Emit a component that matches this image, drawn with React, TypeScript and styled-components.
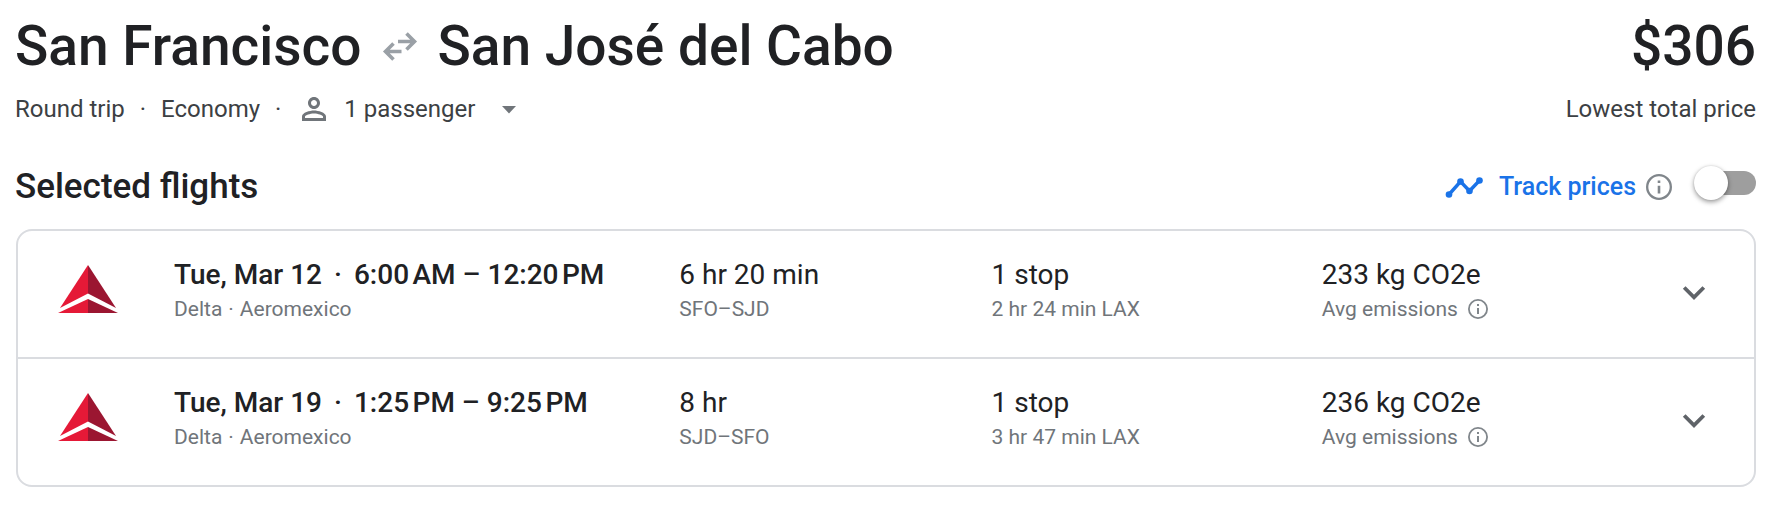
import React, { useState } from "react";
import styled, { createGlobalStyle } from "styled-components";

const GlobalStyle = createGlobalStyle`
  *, *::before, *::after { box-sizing: border-box; }
  body {
    margin: 0;
    background: #fff;
    color: #202124;
    font-family: "Google Sans", Roboto, "Liberation Sans", sans-serif;
  }
  h1, h2, p, ul { margin: 0; padding: 0; }
  button { font: inherit; color: inherit; background: none; border: 0; padding: 0; cursor: pointer; }
  svg { display: block; flex: none; }
`;

const Page = styled.main`
  padding: 16px 24px 24px 15px;
`;

const Bar = styled.div`
  display: flex;
  justify-content: space-between;
  align-items: center;
`;

const TitleBar = styled(Bar)`
  height: 60px;
  font-size: 55px;
  font-weight: 500;
  line-height: 60px;
`;

const Route = styled.h1`
  display: flex;
  align-items: center;
  gap: 20px;
  font: inherit;
`;

const DetailBar = styled(Bar)`
  margin-top: 15px;
  height: 36px;
  color: #3c4043;
  font-size: 24px;
  line-height: 36px;
`;

const TripDetails = styled.div`
  display: flex;
  align-items: center;
`;

const Dot = styled.span<{ $gap: number }>`
  margin: 0 ${(p) => p.$gap}px;
`;

const PassengerButton = styled.button`
  display: flex;
  align-items: center;
  gap: 12px;
  color: #3c4043;
`;

const SectionBar = styled(Bar)`
  margin-top: 32px;
  height: 56px;
`;

const SectionTitle = styled.h2`
  font-size: 35px;
  font-weight: 500;
  line-height: 48px;
`;

const TrackPrices = styled.div`
  display: flex;
  align-items: center;
`;

const TrackLabel = styled.label`
  display: flex;
  align-items: center;
  gap: 16px;
  color: #1a73e8;
  font-size: 25px;
  font-weight: 500;
  line-height: 32px;
`;

const InfoButton = styled.button<{ $gap: number }>`
  margin-left: ${(p) => p.$gap}px;
  color: #80868b;
`;

const Switch = styled.input`
  appearance: none;
  display: flex;
  align-items: center;
  width: 62px;
  height: 24px;
  margin: 0 0 8px 22px;
  border-radius: 12px;
  background: linear-gradient(to right, transparent 16px, #9e9e9e 16px);
  cursor: pointer;

  &::before {
    content: "";
    width: 34px;
    height: 34px;
    border-radius: 50%;
    background: #fff;
    box-shadow: 0 2px 5px rgba(0, 0, 0, 0.4), 0 0 2px rgba(0, 0, 0, 0.12);
  }

  &:checked {
    justify-content: flex-end;
    background: linear-gradient(to left, transparent 16px, #8ab4f8 16px);
  }
`;

const FlightList = styled.ul`
  list-style: none;
  margin: 14px 0 0 1px;
  border: 2px solid #dadce0;
  border-radius: 16px;
`;

const FlightRow = styled.li`
  display: grid;
  grid-template-columns: 116px 505fr 312fr 330fr 348fr 48px;
  padding: 26px 36px 32px 40px;

  & + & {
    border-top: 2px solid #dadce0;
  }
`;

const Logo = styled.div`
  padding-top: 8px;
`;

const Cell = styled.div`
  min-width: 0;
`;

const Primary = styled.p<{ $strong?: boolean }>`
  font-size: 28px;
  font-weight: ${(p) => (p.$strong ? 500 : 400)};
  line-height: 36px;
  white-space: nowrap;
`;

const Secondary = styled.p`
  display: flex;
  align-items: center;
  color: #70757a;
  font-size: 21px;
  line-height: 32px;
  white-space: nowrap;
`;

const ExpandButton = styled.button`
  display: flex;
  align-items: center;
  justify-content: center;
  width: 48px;
  height: 48px;
  margin-top: 12px;
  color: #5f6368;
`;

const SwapIcon = () => (
  <svg width="36" height="36" viewBox="0 0 36 36" fill="none" stroke="#9aa0a6" strokeWidth="3.6" aria-hidden="true">
    <path d="M16 13.5H32.5M24.5 5.5L32.5 13.5L24.5 21.5" />
    <path d="M19.5 23.5H3.5M11.5 15.5L3.5 23.5L11.5 31.5" />
  </svg>
);

const PersonIcon = () => (
  <svg width="36" height="36" viewBox="0 0 24 24" fill="#70757a" aria-hidden="true">
    <path d="M12 6c1.1 0 2 .9 2 2s-.9 2-2 2-2-.9-2-2 .9-2 2-2m0 9c2.7 0 5.8 1.29 6 2v1H6v-.99c.2-.72 3.3-2.01 6-2.01m0-11C9.79 4 8 5.79 8 8s1.79 4 4 4 4-1.79 4-4-1.79-4-4-4zm0 9c-2.67 0-8 1.34-8 4v3h16v-3c0-2.66-5.33-4-8-4z" />
  </svg>
);

const CaretIcon = () => (
  <svg width="44" height="36" viewBox="0 0 44 36" fill="#70757a" aria-hidden="true">
    <path d="M15 15h14l-7 7.500z" />
  </svg>
);

const TrendIcon = () => (
  <svg width="38" height="24" viewBox="0 0 38 24" fill="#1a73e8" aria-hidden="true">
    <path d="M4 19.500L15.500 6.500L24.500 16L34.500 5.500" fill="none" stroke="#1a73e8" strokeWidth="3.400" />
    <circle cx="4" cy="19.500" r="3.300" />
    <circle cx="15.500" cy="6.500" r="3.300" />
    <circle cx="24.500" cy="16" r="3.300" />
    <circle cx="34.500" cy="5.500" r="3.300" />
  </svg>
);

const InfoIcon = ({ size }: { size: number }) => (
  <svg width={size} height={size} viewBox="0 0 20 20" fill="currentColor" aria-hidden="true">
    <path d="M9 5h2v2H9zM9 9h2v6H9zM10 0a10 10 0 1 0 0 20a10 10 0 0 0 0-20zM10 18.200a8.200 8.200 0 1 1 0-16.400a8.200 8.200 0 0 1 0 16.400z" />
  </svg>
);

const ChevronIcon = () => (
  <svg width="24" height="24" viewBox="0 0 24 24" fill="none" stroke="currentColor" strokeWidth="3.800" aria-hidden="true">
    <path d="M2.200 6.500L12 16.300L21.800 6.500" />
  </svg>
);

const DeltaLogo = () => (
  <svg width="60" height="48" viewBox="0 0 60 48" role="img" aria-label="Delta">
    <path d="M30 0L2 43L30 28.500z" fill="#e51937" />
    <path d="M30 0L58 43L30 28.500z" fill="#9b1631" />
    <path d="M30 34L0 48H30z" fill="#e51937" />
    <path d="M30 34L60 48H30z" fill="#9b1631" />
  </svg>
);

interface Flight {
  date: string;
  times: string;
  duration: string;
  airports: string;
  layover: string;
  emissions: string;
}

const flights: Flight[] = [
  {
    date: "Tue, Mar 12",
    times: "6:00\u202fAM – 12:20\u202fPM",
    duration: "6 hr 20 min",
    airports: "SFO–SJD",
    layover: "2 hr 24 min LAX",
    emissions: "233 kg CO2e",
  },
  {
    date: "Tue, Mar 19",
    times: "1:25\u202fPM – 9:25\u202fPM",
    duration: "8 hr",
    airports: "SJD–SFO",
    layover: "3 hr 47 min LAX",
    emissions: "236 kg CO2e",
  },
];

export default function App() {
  const [tracking, setTracking] = useState(false);

  return (
    <Page>
      <GlobalStyle />
      <TitleBar>
        <Route>
          <span>San Francisco</span>
          <SwapIcon />
          <span>San José del Cabo</span>
        </Route>
        <span>$306</span>
      </TitleBar>
      <DetailBar>
        <TripDetails>
          <span>Round trip</span>
          <Dot $gap={15}>·</Dot>
          <span>Economy</span>
          <Dot $gap={15}>·</Dot>
          <PassengerButton type="button" aria-haspopup="dialog">
            <PersonIcon />
            <span>1 passenger</span>
            <CaretIcon />
          </PassengerButton>
        </TripDetails>
        <span>Lowest total price</span>
      </DetailBar>
      <SectionBar>
        <SectionTitle>Selected flights</SectionTitle>
        <TrackPrices>
          <TrackLabel htmlFor="track">
            <TrendIcon />
            Track prices
          </TrackLabel>
          <InfoButton type="button" aria-label="About price tracking" $gap={10}>
            <InfoIcon size={26} />
          </InfoButton>
          <Switch
            id="track"
            type="checkbox"
            role="switch"
            checked={tracking}
            onChange={(e) => setTracking(e.target.checked)}
          />
        </TrackPrices>
      </SectionBar>
      <FlightList>
        {flights.map((f) => (
          <FlightRow key={f.date}>
            <Logo>
              <DeltaLogo />
            </Logo>
            <Cell>
              <Primary $strong>
                {f.date}
                <Dot $gap={12}>·</Dot>
                {f.times}
              </Primary>
              <Secondary>
                Delta<Dot $gap={6}>·</Dot>Aeromexico
              </Secondary>
            </Cell>
            <Cell>
              <Primary>{f.duration}</Primary>
              <Secondary>{f.airports}</Secondary>
            </Cell>
            <Cell>
              <Primary>1 stop</Primary>
              <Secondary>{f.layover}</Secondary>
            </Cell>
            <Cell>
              <Primary>{f.emissions}</Primary>
              <Secondary>
                Avg emissions
                <InfoButton type="button" aria-label="About emissions" $gap={10}>
                  <InfoIcon size={20} />
                </InfoButton>
              </Secondary>
            </Cell>
            <ExpandButton type="button" aria-label={`Flight details, ${f.date}`}>
              <ChevronIcon />
            </ExpandButton>
          </FlightRow>
        ))}
      </FlightList>
    </Page>
  );
}
